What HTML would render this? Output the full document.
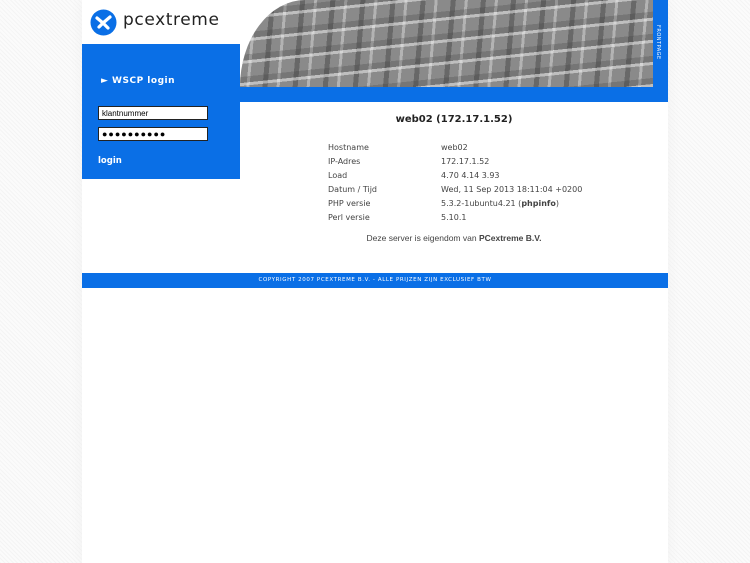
<!DOCTYPE html><html><head><style>
body{margin:0;width:750px;height:563px;background:repeating-linear-gradient(45deg,#f4f4f4 0 1px,#fbfbfb 1px 3px);font-family:"DejaVu Sans","Liberation Sans",sans-serif;overflow:hidden;position:relative}
#wrap{position:absolute;left:82px;top:0;width:586px;height:563px;background:#fff;box-shadow:0 0 12px #f0f0f0}
.blue{background:#0a6fe6;position:absolute}
#img{position:absolute;left:158px;top:0;width:413px;height:87px;overflow:hidden;border-top-left-radius:90px 120px;background:
repeating-linear-gradient(95deg,rgba(40,40,40,.35) 0 5px,transparent 5px 14px,rgba(255,255,255,.35) 14px 17px,transparent 17px 30px),#8a8a8a}
#img::after{content:"";position:absolute;inset:0;background:repeating-linear-gradient(-6deg,rgba(255,255,255,.45) 0 3px,rgba(60,60,60,.25) 3px 9px,transparent 9px 22px)}
.t{font-size:8px;color:#444;position:absolute}
input{position:absolute;box-sizing:border-box;height:14px;border:1px solid #222;font:8px "Liberation Sans",sans-serif;padding:0 3px;background:#fff}
</style></head><body>
<div id="wrap">
<svg style="position:absolute;left:8px;top:9px" width="27" height="27" viewBox="0 0 27 27"><circle cx="13.5" cy="13.5" r="13" fill="#0a6fe6"/><path d="M7 9l6 5 7-6M9 18l4-4 5 5" stroke="#fff" stroke-width="3.2" fill="none" stroke-linecap="round"/></svg>
<div style="position:absolute;left:41px;top:10px;font:17px 'DejaVu Sans',sans-serif;color:#222;letter-spacing:.6px">pcextreme</div>
<div class="blue" style="left:0;top:44px;width:158px;height:135px"></div>
<div id="img"></div>
<div class="blue" style="left:571px;top:0;width:15px;height:87px"></div>
<div style="position:absolute;left:573px;top:25px;writing-mode:vertical-rl;font-size:5px;color:#fff;letter-spacing:.5px">FRONTPAGE</div>
<div class="blue" style="left:158px;top:87px;width:428px;height:15px"></div>
<div style="position:absolute;left:19px;top:76px;color:#fff;font-weight:bold;font-size:9px;letter-spacing:.5px">► WSCP login</div>
<input style="left:16px;top:106px;width:110px" value="klantnummer">
<input style="left:16px;top:127px;width:110px;font-size:9px;letter-spacing:1px" value="●●●●●●●●●●">
<div style="position:absolute;left:16px;top:156px;color:#fff;font-weight:bold;font-size:8.5px">login</div>
<div style="position:absolute;left:158px;width:428px;top:114px;text-align:center;font-weight:bold;font-size:10px;color:#222">web02 (172.17.1.52)</div>
<div class="t" style="left:246px;top:141px;line-height:14px">Hostname<br>IP-Adres<br>Load<br>Datum / Tijd<br>PHP versie<br>Perl versie</div>
<div class="t" style="left:359px;top:141px;line-height:14px">web02<br>172.17.1.52<br>4.70 4.14 3.93<br>Wed, 11 Sep 2013 18:11:04 +0200<br>5.3.2-1ubuntu4.21 (<b>phpinfo</b>)<br>5.10.1</div>
<div class="t" style="left:158px;width:428px;top:233px;text-align:center;font-family:'Liberation Sans',sans-serif;font-size:8.5px">Deze server is eigendom van <b>PCextreme B.V.</b></div>
<div class="blue" style="left:0;top:273px;width:586px;height:15px"></div>
<div style="position:absolute;left:0;width:586px;top:277px;text-align:center;color:#fff;font-size:5.5px;letter-spacing:.6px">COPYRIGHT 2007 PCEXTREME B.V. - ALLE PRIJZEN ZIJN EXCLUSIEF BTW</div>
</div>
</body></html>
